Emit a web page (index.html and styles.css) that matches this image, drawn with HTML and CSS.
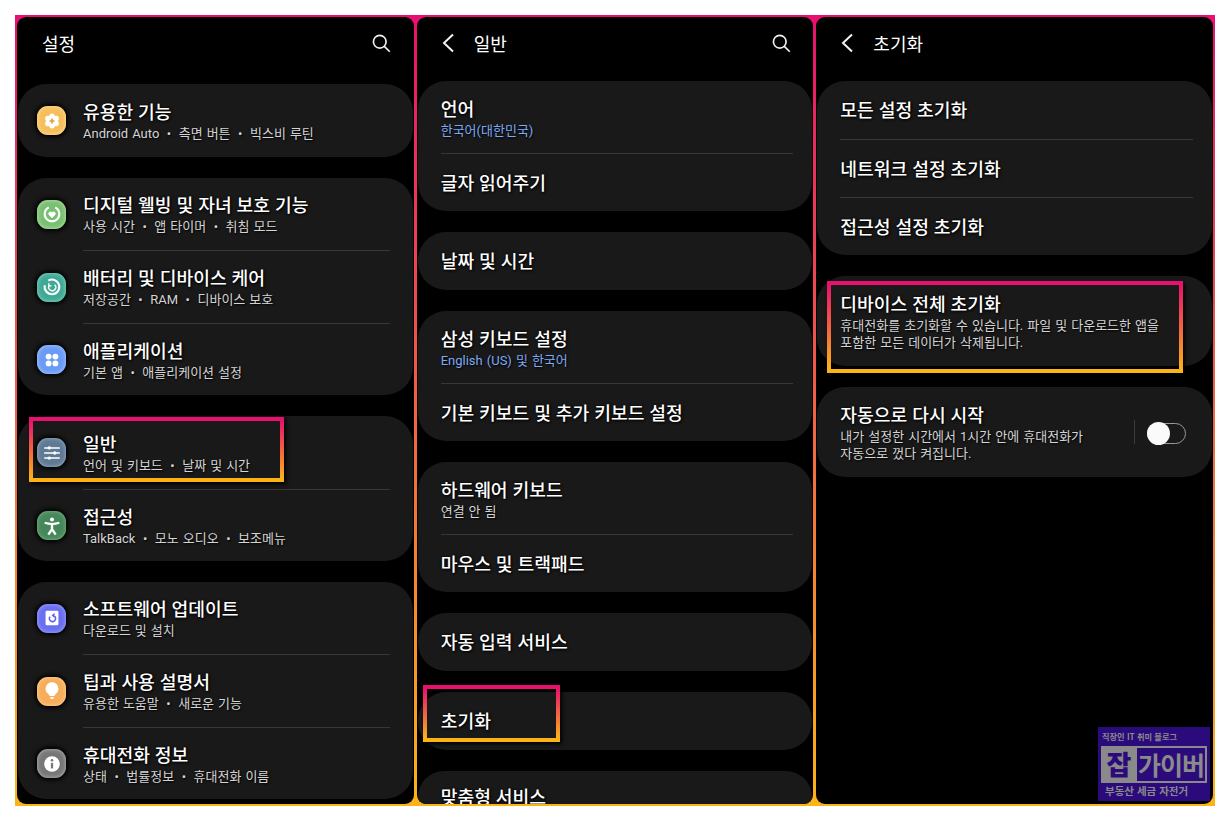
FILE: index.html
```html
<!DOCTYPE html>
<html lang="ko">
  <head>
    <meta charset="UTF-8" />
    <title>설정</title>
    <link rel="stylesheet" href="styles.css">
  </head>
  <body>
    <div class="frame">
      <!-- Panel 1: settings -->
      <div class="phone">
        <div class="top-bar">
          <span class="top-title top-title-main">설정</span>
          <svg class="search search-main" viewBox="0 0 24 24"><circle cx="10.5" cy="10.5" r="7.6"/><path d="M16 16 22.500 22.500"/></svg>
        </div>
        <div class="list list-main">
          <div class="card">
            <div class="row row-icon">
              <span class="icon icon-yellow">
                <svg viewBox="0 0 24 24">
                  <g class="fill-white"><circle cx="12" cy="6.800" r="3"/><circle cx="16.500" cy="9.400" r="3"/><circle cx="16.500" cy="14.600" r="3"/><circle cx="12" cy="17.200" r="3"/><circle cx="7.500" cy="14.600" r="3"/><circle cx="7.500" cy="9.400" r="3"/><circle cx="12" cy="12" r="4"/></g>
                  <path class="stroke-yellow" d="M12 9.200v5.600M9.200 12h5.600"/>
                </svg>
              </span>
              <div class="text"><div class="title">유용한 기능</div><div class="sub">Android Auto<span class="dot">•</span>측면 버튼<span class="dot">•</span>빅스비 루틴</div></div>
            </div>
          </div>
          <div class="card">
            <div class="row row-icon">
              <span class="icon icon-green">
                <svg viewBox="0 0 24 24"><path class="ring" d="M15.500 4.800a8 8 0 1 1-7 0"/><path class="fill-white" d="M12 16.500l-3.700-3.700a2.300 2.300 0 0 1 3.700-2.700 2.300 2.300 0 0 1 3.700 2.700z"/></svg>
              </span>
              <div class="text"><div class="title">디지털 웰빙 및 자녀 보호 기능</div><div class="sub">사용 시간<span class="dot">•</span>앱 타이머<span class="dot">•</span>취침 모드</div></div>
            </div>
            <div class="row row-icon">
              <span class="icon icon-teal">
                <svg viewBox="0 0 24 24"><path class="ring" d="M8 5a8 8 0 1 1-3.800 5"/><path class="ring-thin" d="M14.800 9.500a3.800 3.800 0 1 1-5.600.6M8.500 7.800v3h3"/></svg>
              </span>
              <div class="text"><div class="title">배터리 및 디바이스 케어</div><div class="sub">저장공간<span class="dot">•</span>RAM<span class="dot">•</span>디바이스 보호</div></div>
            </div>
            <div class="row row-icon">
              <span class="icon icon-blue">
                <svg viewBox="0 0 24 24"><circle class="fill-white" cx="8.300" cy="8.300" r="3.200"/><circle class="fill-white" cx="15.700" cy="8.300" r="3.200"/><circle class="fill-white" cx="8.300" cy="15.700" r="3.200"/><circle class="fill-white" cx="15.700" cy="15.700" r="3.200"/></svg>
              </span>
              <div class="text"><div class="title">애플리케이션</div><div class="sub">기본 앱<span class="dot">•</span>애플리케이션 설정</div></div>
            </div>
          </div>
          <div class="card">
            <div class="row row-icon">
              <span class="icon icon-slate">
                <svg viewBox="0 0 24 24"><path class="ring-thin" d="M3.500 6.500h17M3.500 12h17M3.500 17.500h17"/><circle class="fill-white" cx="9" cy="6.500" r="1.800"/><circle class="fill-white" cx="15" cy="12" r="1.800"/><circle class="fill-white" cx="9" cy="17.500" r="1.800"/></svg>
              </span>
              <div class="text"><div class="title">일반</div><div class="sub">언어 및 키보드<span class="dot">•</span>날짜 및 시간</div></div>
            </div>
            <div class="row row-icon row-short">
              <span class="icon icon-forest">
                <svg viewBox="0 0 24 24"><circle class="fill-white" cx="12" cy="4.800" r="2.200"/><path class="ring" d="M4 8.500c5.300 1.700 10.700 1.700 16 0"/><path class="ring-thick" d="M12 10v5.500L8 21.500M12 15.500l4 6"/></svg>
              </span>
              <div class="text"><div class="title">접근성</div><div class="sub">TalkBack<span class="dot">•</span>모노 오디오<span class="dot">•</span>보조메뉴</div></div>
            </div>
          </div>
          <div class="card">
            <div class="row row-icon">
              <span class="icon icon-indigo">
                <svg viewBox="0 0 24 24"><rect class="fill-white" x="5" y="4" width="14" height="16" rx="1.500"/><path class="stroke-indigo" d="M9.800 10.500a3.400 3.400 0 1 0 3.400-1.300M14.800 7.300 12.800 9.200l2 1.700"/></svg>
              </span>
              <div class="text"><div class="title">소프트웨어 업데이트</div><div class="sub">다운로드 및 설치</div></div>
            </div>
            <div class="row row-icon">
              <span class="icon icon-orange">
                <svg viewBox="0 0 24 24"><path class="fill-white" d="M12 2.500a7 7 0 0 0-4 12.700l1.500 2.300h5l1.500-2.300a7 7 0 0 0-4-12.700zM9.800 18.800h4.400l-.8 2h-2.800z"/></svg>
              </span>
              <div class="text"><div class="title">팁과 사용 설명서</div><div class="sub">유용한 도움말<span class="dot">•</span>새로운 기능</div></div>
            </div>
            <div class="row row-icon">
              <span class="icon icon-gray">
                <svg viewBox="0 0 24 24"><circle class="fill-white" cx="12" cy="12" r="8.500"/><circle class="fill-gray" cx="12" cy="8" r="1.400"/><rect class="fill-gray" x="10.800" y="10.800" width="2.400" height="6"/></svg>
              </span>
              <div class="text"><div class="title">휴대전화 정보</div><div class="sub">상태<span class="dot">•</span>법률정보<span class="dot">•</span>휴대전화 이름</div></div>
            </div>
          </div>
        </div>
      </div>

      <!-- Panel 2: general -->
      <div class="phone">
        <div class="top-bar">
          <svg class="back" viewBox="0 0 14 20"><path d="M12 1.500 3 10l9 8.500"/></svg>
          <span class="top-title">일반</span>
          <svg class="search" viewBox="0 0 24 24"><circle cx="10.500" cy="10.500" r="7.600"/><path d="M16 16 22.500 22.500"/></svg>
        </div>
        <div class="list">
          <div class="card">
            <div class="row row-two"><div class="text"><div class="title">언어</div><div class="sub sub-blue">한국어(대한민국)</div></div></div>
            <div class="row row-one"><div class="text"><div class="title">글자 읽어주기</div></div></div>
          </div>
          <div class="card">
            <div class="row row-single"><div class="text"><div class="title">날짜 및 시간</div></div></div>
          </div>
          <div class="card">
            <div class="row row-two"><div class="text"><div class="title">삼성 키보드 설정</div><div class="sub sub-blue">English (US) 및 한국어</div></div></div>
            <div class="row row-one"><div class="text"><div class="title">기본 키보드 및 추가 키보드 설정</div></div></div>
          </div>
          <div class="card">
            <div class="row row-two"><div class="text"><div class="title">하드웨어 키보드</div><div class="sub">연결 안 됨</div></div></div>
            <div class="row row-one"><div class="text"><div class="title">마우스 및 트랙패드</div></div></div>
          </div>
          <div class="card">
            <div class="row row-single"><div class="text"><div class="title">자동 입력 서비스</div></div></div>
          </div>
          <div class="card">
            <div class="row row-single"><div class="text"><div class="title">초기화</div></div></div>
          </div>
          <div class="card">
            <div class="row row-cut"><div class="text"><div class="title">맞춤형 서비스</div></div></div>
          </div>
        </div>
      </div>

      <!-- Panel 3: reset -->
      <div class="phone">
        <div class="top-bar">
          <svg class="back" viewBox="0 0 14 20"><path d="M12 1.500 3 10l9 8.500"/></svg>
          <span class="top-title">초기화</span>
        </div>
        <div class="list">
          <div class="card">
            <div class="row row-single"><div class="text"><div class="title">모든 설정 초기화</div></div></div>
            <div class="row row-single"><div class="text"><div class="title">네트워크 설정 초기화</div></div></div>
            <div class="row row-single"><div class="text"><div class="title">접근성 설정 초기화</div></div></div>
          </div>
          <div class="card">
            <div class="row row-long"><div class="text"><div class="title">디바이스 전체 초기화</div><div class="sub">휴대전화를 초기화할 수 있습니다. 파일 및 다운로드한 앱을<br>포함한 모든 데이터가 삭제됩니다.</div></div></div>
          </div>
          <div class="card">
            <div class="row row-long">
              <div class="text"><div class="title">자동으로 다시 시작</div><div class="sub">내가 설정한 시간에서 1시간 안에 휴대전화가<br>자동으로 껐다 켜집니다.</div></div>
              <span class="toggle-line"></span>
              <span class="toggle"><span class="knob"></span></span>
            </div>
          </div>
        </div>
      </div>

      <!-- red/yellow call-outs drawn over the screens -->
      <div class="mark mark-general"></div>
      <div class="mark mark-reset"></div>
      <div class="mark mark-device"></div>

      <div class="stamp">
        <div class="stamp-top">직장인 IT 취미 블로그</div>
        <div class="stamp-logo"><span class="stamp-big">잡</span><span class="stamp-name">가이버</span></div>
        <div class="stamp-bottom">부동산 세금 자전거</div>
      </div>
    </div>
  </body>
</html>
```
FILE: styles.css
```css
* {
  box-sizing: border-box;
}
body {
  margin: 0;
  padding: 15px;
  background-color: #ffffff;
  font-family: Roboto, "Noto Sans CJK KR", "Noto Sans", sans-serif;
  color: #ffffff;
}
.frame {
  position: relative;
  width: 1200px;
  height: 791px;
  padding: 2px;
  display: flex;
  gap: 3px;
  background: linear-gradient(to bottom, #e8106f, #fcb415);
}
.phone {
  flex: 1;
  min-width: 0;
  height: 100%;
  background-color: #000000;
  border-radius: 9px;
  overflow: hidden;
}
.top-bar {
  height: 52px;
  padding: 0 22px 0 24px;
  display: flex;
  align-items: center;
  margin-bottom: 12px;
}
.top-title {
  font-size: 18px;
  margin-left: 19px;
  margin-top: 4px;
  line-height: 52px;
}
.top-title-main {
  margin-left: 1px;
}
.search {
  width: 20px;
  height: 20px;
  margin-left: auto;
  fill: none;
  stroke: #f2f2f2;
  stroke-width: 2;
}
.search-main {
  margin-right: 1px;
}
.back {
  width: 14px;
  height: 20px;
  fill: none;
  stroke: #f2f2f2;
  stroke-width: 2;
}
.list {
  padding: 0 1px;
  display: flex;
  flex-direction: column;
  gap: 21px;
}
.list-main {
  padding-top: 3px;
}
.card {
  background-color: #191919;
  border-radius: 28px;
  padding: 0 19px 0 23px;
  flex-shrink: 0;
}
.list-main .card {
  padding: 0 23px;
}
.row {
  display: flex;
  align-items: center;
  border-top: 1px solid #373737;
}
.row:first-child {
  border-top: none;
}
.row-icon {
  height: 72.500px;
  position: relative;
  margin-left: 42px;
}
.row-short {
  height: 72px;
}
.row-two {
  height: 72px;
}
.row-one {
  height: 58px;
}
.row-single {
  height: 58px;
}
.row-cut {
  height: 52px;
}
.row-long {
  height: 90px;
}
.icon {
  position: absolute;
  left: -46px;
  top: 50%;
  margin-top: -14px;
  width: 29px;
  height: 29px;
  border-radius: 11px;
  display: flex;
  align-items: center;
  justify-content: center;
  box-shadow: 0 0 4px 2px #000000;
}
.icon svg {
  width: 22px;
  height: 22px;
}
.icon-yellow { background: #f6bf5c; box-shadow: 0 0 4px 2px #000000, inset 0 0 4px #ffe6ab; }
.icon-green { background: #78bf74; box-shadow: 0 0 4px 2px #000000, inset 0 0 4px #c2eaa5; }
.icon-teal { background: #3fa996; box-shadow: 0 0 4px 2px #000000, inset 0 0 4px #8fdcc9; }
.icon-blue { background: #6a9bf5; box-shadow: 0 0 4px 2px #000000, inset 0 0 4px #b5d0ff; }
.icon-slate { background: #5f7a94; box-shadow: 0 0 4px 2px #000000, inset 0 0 4px #9fb5cb; }
.icon-forest { background: #45875a; box-shadow: 0 0 4px 2px #000000, inset 0 0 4px #7ebc8c; }
.icon-indigo { background: #6a6ef0; box-shadow: 0 0 4px 2px #000000, inset 0 0 4px #aab0ff; }
.icon-orange { background: #f6ad5c; box-shadow: 0 0 4px 2px #000000, inset 0 0 4px #ffd7a0; }
.icon-gray { background: #777777; box-shadow: 0 0 4px 2px #000000, inset 0 0 4px #bdbdbd; }
.fill-white { fill: #ffffff; }
.fill-gray { fill: #777777; }
.stroke-yellow {
  fill: none;
  stroke: #d9a040;
  stroke-width: 1.800;
}
.stroke-indigo {
  fill: none;
  stroke: #5f63e8;
  stroke-width: 1.700;
}
.ring {
  fill: none;
  stroke: #ffffff;
  stroke-width: 2.200;
}
.ring-thin {
  fill: none;
  stroke: #ffffff;
  stroke-width: 1.500;
}
.ring-thick {
  fill: none;
  stroke: #ffffff;
  stroke-width: 2.600;
}
.text {
  min-width: 0;
  padding-top: 2px;
}
.title {
  font-size: 18.200px;
  font-weight: 500;
  line-height: 24px;
  word-spacing: 0.4px;
  white-space: nowrap;
  text-shadow: 1px 1px 3px #000000, 0 0 2px #000000;
}
.sub {
  font-size: 13px;
  line-height: 17px;
  word-spacing: 0.8px;
  color: #d4d4d4;
  white-space: nowrap;
  text-shadow: 1px 1px 2px #000000;
}
.sub-blue {
  color: #7da9f5;
}
.dot {
  margin: 0 7.500px;
}
.toggle-line {
  width: 1px;
  height: 24px;
  margin-left: auto;
  background-color: #3c3c3c;
}
.toggle {
  position: relative;
  width: 39px;
  height: 21px;
  margin-left: 12px;
  margin-right: 7px;
  margin-top: 2px;
  border: 1px solid #9a9a9a;
  border-radius: 11px;
}
.knob {
  position: absolute;
  left: -1px;
  top: -2px;
  width: 23px;
  height: 23px;
  border-radius: 50%;
  background-color: #fafafa;
}
.mark {
  position: absolute;
  border: 4px solid;
  border-image: linear-gradient(to bottom, #e8106f, #fcb415) 1;
  box-shadow: 2px 2px 4px #000000;
}
.mark-general {
  left: 14px;
  top: 402px;
  width: 255px;
  height: 65px;
}
.mark-reset {
  left: 408px;
  top: 670px;
  width: 137px;
  height: 57px;
}
.mark-device {
  left: 812px;
  top: 266px;
  width: 356px;
  height: 92px;
}
.stamp {
  position: absolute;
  left: 1083px;
  top: 712px;
  width: 112px;
  height: 74px;
  padding: 3px 3px;
  background-color: #2b0b7c;
  color: #8a8a8a;
  font-family: "Noto Sans CJK KR", sans-serif;
  font-weight: 700;
  white-space: nowrap;
}
.stamp-top {
  font-size: 8.200px;
  line-height: 13px;
  padding-left: 1px;
}
.stamp-logo {
  display: flex;
  height: 37px;
  padding: 2px;
  background-color: #8a8a8a;
  margin-top: 3px;
}
.stamp-big {
  width: 32px;
  text-align: center;
  font-size: 27px;
  line-height: 32px;
  font-weight: 900;
  color: #2b0b7c;
}
.stamp-name {
  flex: 1;
  margin-left: 2px;
  background-color: #2b0b7c;
  text-align: center;
  font-size: 25px;
  line-height: 32px;
  letter-spacing: -1px;
}
.stamp-bottom {
  font-size: 10.500px;
  line-height: 15px;
  padding-left: 4px;
}
```
